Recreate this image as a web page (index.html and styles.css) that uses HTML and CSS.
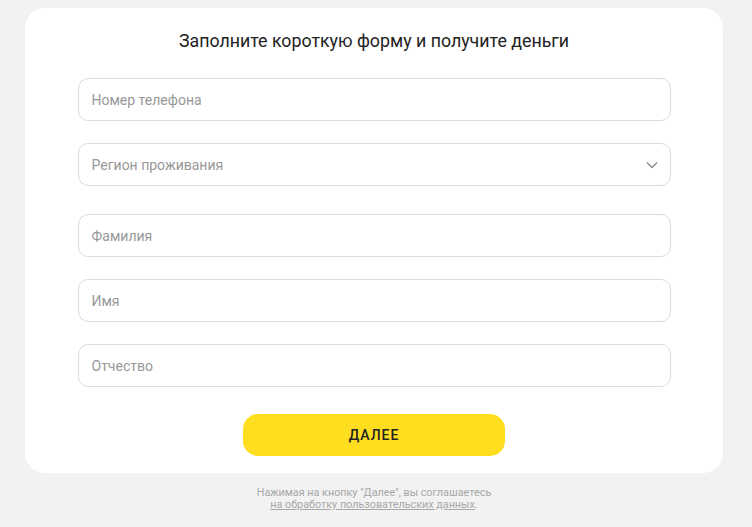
FILE: index.html
```html
<!DOCTYPE html>
<html lang="ru">
<head>
<meta charset="utf-8">
<title>Форма</title>
<link rel="stylesheet" href="styles.css">
</head>
<body>
<main class="page">
  <form class="card">
    <h1 class="title">Заполните короткую форму и получите деньги</h1>
    <div class="fields">
      <input class="field" type="text" placeholder="Номер телефона">
      <div class="field select">
        <span class="placeholder">Регион проживания</span>
        <svg class="chevron" width="12" height="8" viewBox="0 0 12 8"><path d="M1 1.5 L6 6.5 L11 1.5" fill="none" stroke="#8a8a8a" stroke-width="1.4"/></svg>
      </div>
      <input class="field field-gap" type="text" placeholder="Фамилия">
      <input class="field" type="text" placeholder="Имя">
      <input class="field" type="text" placeholder="Отчество">
    </div>
    <button class="submit" type="button">ДАЛЕЕ</button>
  </form>
  <p class="note">Нажимая на кнопку "Далее", вы соглашаетесь<br><a href="#" class="note-link">на обработку пользовательских данных</a>.</p>
</main>
</body>
</html>
```

FILE: styles.css
```css
* { box-sizing: border-box; }
html, body { margin: 0; padding: 0; }
body {
  background: #f2f2f2;
  font-family: Roboto, "Liberation Sans", Arial, sans-serif;
  color: #222;
}
.page {
  display: flex;
  flex-direction: column;
  align-items: center;
  padding: 8px 4px 0 0;
}
.card {
  width: 698px;
  background: #fff;
  border-radius: 20px;
  padding: 20px 0 17px;
  display: flex;
  flex-direction: column;
  align-items: center;
}
.title {
  margin: 0;
  font-size: 17.8px;
  font-weight: 400;
  line-height: 26px;
  color: #222;
  text-align: center;
}
.fields {
  margin-top: 24px;
  display: flex;
  flex-direction: column;
  gap: 22px;
}
.field {
  display: flex;
  align-items: center;
  justify-content: space-between;
  width: 593px;
  height: 43px;
  border: 1px solid #dcdcdc;
  border-radius: 10px;
  background: #fff;
  padding: 0 12px 0 13px;
  font-family: Roboto, "Liberation Sans", Arial, sans-serif;
  font-size: 14px;
  color: #222;
  outline: none;
}
.field::placeholder, .placeholder {
  color: #989898;
  opacity: 1;
}
.field-gap { margin-top: 6px; }
.submit {
  margin-top: 27px;
  width: 262px;
  height: 42px;
  border: none;
  border-radius: 15px;
  background: #ffdd1f;
  font-family: Roboto, "Liberation Sans", Arial, sans-serif;
  font-size: 14px;
  font-weight: 500;
  letter-spacing: 1px;
  color: #222;
}
.note {
  margin: 14px 0 0;
  font-size: 10.8px;
  line-height: 12px;
  color: #a8a8a8;
  text-align: center;
}
.note-link {
  color: #a8a8a8;
  text-decoration: underline;
}
```
